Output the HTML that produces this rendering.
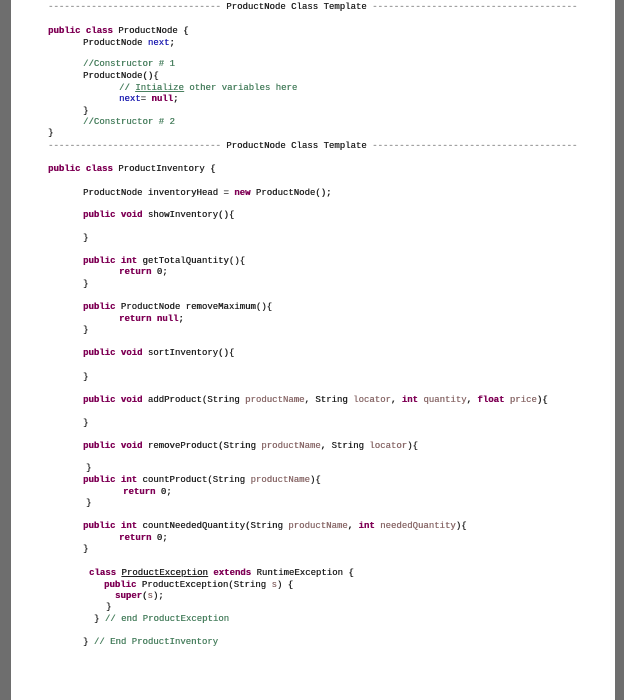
<!DOCTYPE html>
<html><head><meta charset="utf-8"><style>
html,body{margin:0;padding:0;}
body{width:624px;height:700px;background:#fff;position:relative;overflow:hidden;font-family:"Liberation Mono",monospace;font-size:9px;color:#222;}
.l{position:absolute;white-space:pre;line-height:12px;text-shadow:0.3px 0 0 currentColor;}
.k{color:#7f0055;font-weight:bold;}
.f{color:#1a1ab0;}
.p{color:#8a6a6a;}
.c{color:#4a8060;}
.d{color:#888;}
.u{text-decoration:underline;}
#lb{position:absolute;left:0;top:0;width:11px;height:700px;background:#6e6e6e;}
#rb{position:absolute;left:615px;top:0;width:9px;height:700px;background:#6e6e6e;}
</style></head><body>
<div id="lb"></div><div id="rb"></div>
<div class="l" style="left:48px;top:1px"><span class="d">--------------------------------</span> ProductNode Class Template <span class="d">--------------------------------------</span></div>
<div class="l" style="left:48px;top:25px"><span class="k">public class</span> ProductNode {</div>
<div class="l" style="left:83px;top:37px">ProductNode <span class="f">next</span>;</div>
<div class="l c" style="left:83px;top:58px">//Constructor # 1</div>
<div class="l" style="left:83px;top:70px">ProductNode(){</div>
<div class="l c" style="left:119px;top:82px">// <span class="u">Intialize</span> other variables here</div>
<div class="l" style="left:119px;top:93px"><span class="f">next</span>= <span class="k">null</span>;</div>
<div class="l" style="left:83px;top:105px">}</div>
<div class="l c" style="left:83px;top:116px">//Constructor # 2</div>
<div class="l" style="left:48px;top:127px">}</div>
<div class="l" style="left:48px;top:140px"><span class="d">--------------------------------</span> ProductNode Class Template <span class="d">--------------------------------------</span></div>
<div class="l" style="left:48px;top:163px"><span class="k">public class</span> ProductInventory {</div>
<div class="l" style="left:83px;top:187px">ProductNode inventoryHead = <span class="k">new</span> ProductNode();</div>
<div class="l" style="left:83px;top:209px"><span class="k">public void</span> showInventory(){</div>
<div class="l" style="left:83px;top:232px">}</div>
<div class="l" style="left:83px;top:255px"><span class="k">public int</span> getTotalQuantity(){</div>
<div class="l" style="left:119px;top:266px"><span class="k">return</span> 0;</div>
<div class="l" style="left:83px;top:278px">}</div>
<div class="l" style="left:83px;top:301px"><span class="k">public</span> ProductNode removeMaximum(){</div>
<div class="l" style="left:119px;top:313px"><span class="k">return null</span>;</div>
<div class="l" style="left:83px;top:324px">}</div>
<div class="l" style="left:83px;top:347px"><span class="k">public void</span> sortInventory(){</div>
<div class="l" style="left:83px;top:371px">}</div>
<div class="l" style="left:83px;top:394px"><span class="k">public void</span> addProduct(String <span class="p">productName</span>, String <span class="p">locator</span>, <span class="k">int</span> <span class="p">quantity</span>, <span class="k">float</span> <span class="p">price</span>){</div>
<div class="l" style="left:83px;top:417px">}</div>
<div class="l" style="left:83px;top:440px"><span class="k">public void</span> removeProduct(String <span class="p">productName</span>, String <span class="p">locator</span>){</div>
<div class="l" style="left:86px;top:462px">}</div>
<div class="l" style="left:83px;top:474px"><span class="k">public int</span> countProduct(String <span class="p">productName</span>){</div>
<div class="l" style="left:123px;top:486px"><span class="k">return</span> 0;</div>
<div class="l" style="left:86px;top:497px">}</div>
<div class="l" style="left:83px;top:520px"><span class="k">public int</span> countNeededQuantity(String <span class="p">productName</span>, <span class="k">int</span> <span class="p">neededQuantity</span>){</div>
<div class="l" style="left:119px;top:532px"><span class="k">return</span> 0;</div>
<div class="l" style="left:83px;top:543px">}</div>
<div class="l" style="left:89px;top:567px"><span class="k">class</span> <span class="u">ProductException</span> <span class="k">extends</span> RuntimeException {</div>
<div class="l" style="left:104px;top:579px"><span class="k">public</span> ProductException(String <span class="p">s</span>) {</div>
<div class="l" style="left:115px;top:590px"><span class="k">super</span>(<span class="p">s</span>);</div>
<div class="l" style="left:106px;top:601px">}</div>
<div class="l" style="left:94px;top:613px">} <span class="c">// end ProductException</span></div>
<div class="l" style="left:83px;top:636px">} <span class="c">// End ProductInventory</span></div>
</body></html>
